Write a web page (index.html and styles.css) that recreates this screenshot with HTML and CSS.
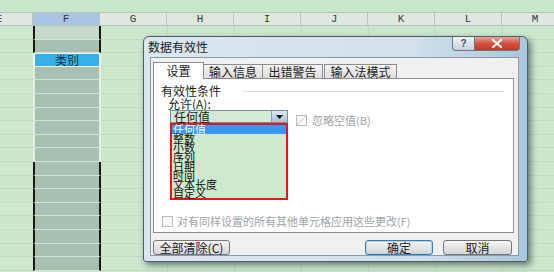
FILE: index.html
```html
<!DOCTYPE html>
<html lang="zh-CN">

<head>
    <meta charset="UTF-8">
    <title>数据有效性</title>
    <link rel="stylesheet" href="styles.css">
</head>

<body>
    <div class="sheet">
        <div class="topband"></div>
        <div class="colheads">
            <div class="ch">E</div>
            <div class="ch sel">F</div>
            <div class="ch">G</div>
            <div class="ch">H</div>
            <div class="ch">I</div>
            <div class="ch">J</div>
            <div class="ch">K</div>
            <div class="ch">L</div>
            <div class="ch">M</div>
        </div>
        <div class="body">
            <div class="col-e"></div>
            <div class="col-f">
                <div class="cell light edge"></div>
                <div class="cell edge"></div>
                <div class="cell head">类别</div>
                <div class="cell"></div>
                <div class="cell"></div>
                <div class="cell"></div>
                <div class="cell"></div>
                <div class="cell"></div>
                <div class="cell"></div>
                <div class="cell"></div>
                <div class="cell edge"></div>
                <div class="cell edge"></div>
                <div class="cell edge"></div>
                <div class="cell edge"></div>
                <div class="cell edge"></div>
                <div class="cell edge"></div>
                <div class="cell edge"></div>
                <div class="cell edge"></div>
            </div>
            <div class="col-rest"></div>
        </div>
    </div>

    <div class="dialog">
        <div class="titlebar">
            <span class="title">数据有效性</span>
            <div class="tb-btn help">?</div>
            <div class="tb-btn close">
                <svg width="12" height="9" viewBox="0 0 12 9">
                    <path d="M2 1 L10 8 M10 1 L2 8" stroke="#fff" stroke-width="2.2" stroke-linecap="round" />
                </svg>
            </div>
        </div>
        <div class="client">
            <div class="tabs">
                <div class="tab active">设置</div>
                <div class="tab t2">输入信息</div>
                <div class="tab t3">出错警告</div>
                <div class="tab t4">输入法模式</div>
            </div>
            <div class="panel">
                <div class="group">
                    <span>有效性条件</span>
                    <div class="rule"></div>
                </div>
                <div class="allow">允许(<u>A</u>):</div>
                <div class="combo-row">
                    <div class="combo">
                        <span class="combo-text">任何值</span>
                        <div class="combo-btn">
                            <svg width="7" height="4" viewBox="0 0 7 4">
                                <path d="M0 0 L7 0 L3.5 4 Z" fill="#000" />
                            </svg>
                        </div>
                    </div>
                    <div class="check on"></div>
                    <span class="dim">忽略空值(B)</span>
                </div>
                <div class="list">
                    <div class="item hl">任何值</div>
                    <div class="item">整数</div>
                    <div class="item">小数</div>
                    <div class="item">序列</div>
                    <div class="item">日期</div>
                    <div class="item">时间</div>
                    <div class="item">文本长度</div>
                    <div class="item">自定义</div>
                </div>
                <div class="apply-row">
                    <div class="check"></div>
                    <span class="dim">对有同样设置的所有其他单元格应用这些更改(F)</span>
                </div>
            </div>
            <div class="buttons">
                <div class="btn clear">全部清除(C)</div>
                <div class="btn ok">确定</div>
                <div class="btn cancel">取消</div>
            </div>
        </div>
    </div>
</body>

</html>
```

FILE: styles.css
```css
* {
    margin: 0;
    padding: 0;
    box-sizing: border-box;
}

body {
    width: 554px;
    height: 272px;
    overflow: hidden;
    position: relative;
    background-color: #cbe7cd;
    font-family: 'Noto Sans CJK SC', 'Noto Sans', sans-serif;
    font-size: 12px;
    color: #1c1c1c;
}

/* spreadsheet behind the dialog */
.sheet {
    display: flex;
    flex-direction: column;
    height: 100%;
}

.topband {
    height: 13px;
    background-color: #c9e7cb;
    border-bottom: 1px solid #aec9b2;
}

.colheads {
    display: flex;
    height: 13px;
    margin-left: -34px;
    background-color: #dfe8e0;
    border-bottom: 1px solid #b3c7b6;
}

.ch {
    flex: 0 0 67px;
    border-right: 1px solid #b7c9ba;
    font-family: 'Liberation Mono', monospace;
    font-size: 11px;
    line-height: 12px;
    text-align: center;
    color: #3a3a3a;
}

.ch.sel {
    background-color: #a9c3e2;
}

.body {
    display: flex;
    flex: 1;
}

.col-e {
    flex: 0 0 33px;
    background-image: repeating-linear-gradient(to bottom, transparent 0 12.6px, #bcdcbf 12.6px 13.6px);
}

.col-f {
    flex: 0 0 68px;
    display: flex;
    flex-direction: column;
}

.cell {
    height: 13.6px;
    flex: 0 0 13.6px;
    background-color: #a8c0b2;
    border-left: 2px solid #e6eee8;
    border-right: 2px solid #e6eee8;
    border-bottom: 1px solid #d3e0d8;
}

.cell.edge {
    border-left-color: #1e1414;
    border-right-color: #1e1414;
}

.cell.light {
    background-color: #c4d9ca;
}

.cell.head {
    background-color: #37b1e9;
    border: 1px solid #f2f6f8;
    border-left-width: 2px;
    border-right-width: 2px;
    text-align: center;
    line-height: 11px;
    font-size: 12px;
    color: #17324a;
}

.col-rest {
    flex: 1;
    background-image:
        repeating-linear-gradient(to bottom, transparent 0 12.6px, #bddcc0 12.6px 13.6px),
        repeating-linear-gradient(to right, transparent 0 66px, #bddcc0 66px 67px);
}

/* dialog window */
.dialog {
    position: absolute;
    left: 143px;
    top: 36px;
    width: 385px;
    height: 226px;
    padding: 0 8px 5px 6px;
    border: 1px solid #4e5d6c;
    border-radius: 6px 6px 3px 3px;
    background: linear-gradient(to right, #dce6ee, #d2e0ea 70%, #a9c7dc);
    box-shadow: 3px 3px 6px rgba(20, 30, 30, 0.55);
    display: flex;
    flex-direction: column;
}

.titlebar {
    height: 20px;
    display: flex;
    align-items: flex-start;
    margin-right: -1px;
}

.title {
    margin-left: -2px;
    margin-top: 3px;
    font-size: 12px;
    line-height: 14px;
    color: #222;
}

.tb-btn {
    height: 14px;
    border: 1px solid #6c7a88;
    border-top: none;
    display: flex;
    align-items: center;
    justify-content: center;
}

.help {
    margin-left: auto;
    width: 23px;
    border-radius: 0 0 0 4px;
    background: linear-gradient(to bottom, #eef2f6, #c6d2dc);
    font-family: 'Liberation Sans', sans-serif;
    font-size: 10px;
    font-weight: bold;
    color: #44505c;
}

.close {
    width: 45px;
    border-left: none;
    border-radius: 0 0 4px 0;
    background: linear-gradient(to bottom, #e9a79a, #d2523e 50%, #c23a26);
}

.client {
    flex: 1;
    border: 1px solid #8b9aa8;
    background-color: #f0f0f0;
    padding: 4px 4px 0 2px;
    display: flex;
    flex-direction: column;
}

.tabs {
    display: flex;
    align-items: flex-end;
    height: 16px;
    position: relative;
    z-index: 1;
}

.tab {
    height: 14px;
    border: 1px solid #8d8d8d;
    border-bottom: none;
    background: linear-gradient(to bottom, #f4f4f4, #dedede);
    font-size: 12px;
    line-height: 13px;
    text-align: center;
    color: #1c1c1c;
}

.tab.active {
    width: 51px;
    height: 17px;
    margin-bottom: -1px;
    background: #fff;
    line-height: 16px;
}

.tab.t2 {
    width: 59px;
    border-left: none;
}

.tab.t3 {
    width: 60px;
    border-left: none;
}

.tab.t4 {
    width: 73px;
    margin-left: 1px;
}

.panel {
    position: relative;
    height: 155px;
    background-color: #fff;
    border: 1px solid #8d8d8d;
    padding: 6px 7px 5px 7px;
    display: flex;
    flex-direction: column;
}

.group {
    display: flex;
    align-items: center;
    height: 12px;
    line-height: 12px;
}

.rule {
    flex: 1;
    margin-left: 22px;
    margin-right: 2px;
    border-top: 1px solid #d8e0e6;
}

.allow {
    margin-top: 1px;
    margin-left: 7px;
    height: 12px;
    line-height: 12px;
}

.allow u {
    text-decoration: none;
}

.combo-row {
    display: flex;
    align-items: center;
    height: 13px;
}

.combo {
    margin-left: 9px;
    width: 118px;
    height: 13px;
    border: 1px solid #7d8c99;
    background-color: #d4ead5;
    display: flex;
    align-items: center;
}

.combo-text {
    margin-left: 3px;
    line-height: 11px;
    flex: 1;
}

.combo-btn {
    width: 16px;
    height: 11px;
    border-left: 1px solid #8aa0b4;
    background: linear-gradient(to bottom, #dfe9f3, #a9bfd4);
    display: flex;
    align-items: center;
    justify-content: center;
}

.check {
    width: 11px;
    height: 11px;
    border: 1px solid #b6bcc2;
    background-color: #fafafa;
}

.combo-row .check {
    margin-left: 8px;
    margin-top: 7px;
}

.check.on {
    background: linear-gradient(135deg, transparent 45%, #c2c6ca 45% 55%, transparent 55%), #fafafa;
}

.combo-row .dim {
    margin-left: 5px;
    margin-top: 8px;
}

.dim {
    color: #a0a4a8;
    font-size: 11px;
    line-height: 11px;
}

.list {
    position: absolute;
    left: 16px;
    top: 44px;
    width: 118px;
    height: 77px;
    border: 2px solid #e3161c;
    background-color: #cde9ce;
}

.item {
    height: 9.2px;
    line-height: 9.2px;
    font-size: 11px;
    padding-left: 1px;
    color: #111;
    white-space: nowrap;
}

.item.hl {
    background-color: #3597f8;
    color: #fff;
}

.apply-row {
    margin-top: auto;
    display: flex;
    align-items: center;
    height: 11px;
    margin-left: 1px;
}

.apply-row .dim {
    margin-left: 4px;
}

.buttons {
    display: flex;
    margin-top: 7px;
    height: 15px;
}

.btn {
    height: 15px;
    border: 1px solid #767676;
    border-radius: 3px;
    background: linear-gradient(to bottom, #f6f6f6, #e4e4e4 50%, #d6d6d6);
    font-size: 12px;
    line-height: 13px;
    text-align: center;
    color: #1c1c1c;
}

.btn.clear {
    width: 77px;
}

.btn.ok {
    width: 68px;
    margin-left: auto;
    border-color: #3b7db3;
    box-shadow: inset 0 0 0 1px #a6d6f2;
}

.btn.cancel {
    width: 69px;
    margin-left: 10px;
    margin-right: 2px;
}
```
